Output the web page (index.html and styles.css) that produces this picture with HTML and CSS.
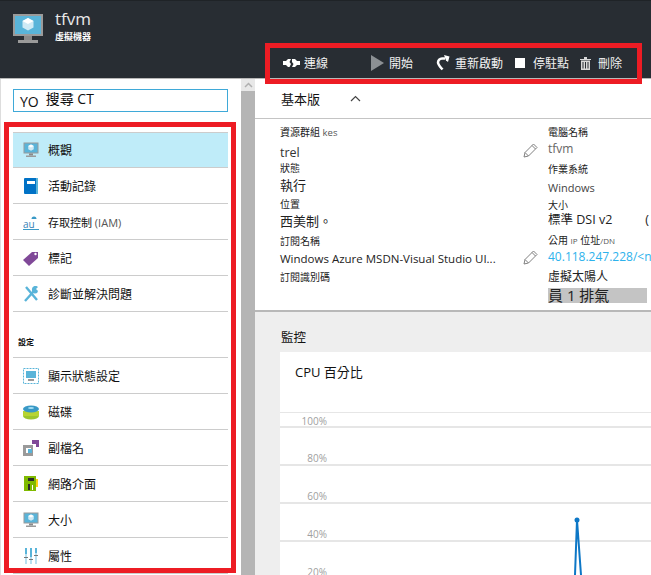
FILE: index.html
```html
<!DOCTYPE html>
<html lang="zh-TW">
<head>
  <meta charset="UTF-8">
  <meta name="viewport" content="width=device-width, initial-scale=1.0">
  <title>tfvm</title>
  <link rel="stylesheet" href="styles.css">
</head>
<body>

  <svg class="defs" width="0" height="0">
    <symbol id="vm" viewBox="0 0 32 32">
      <rect x="1" y="1" width="30" height="22" fill="#9a9a9a"/>
      <rect x="3" y="3" width="26" height="18" fill="#59b4d9"/>
      <path d="M16 5l5.500 3v6.500l-5.500 3-5.500-3V8z" fill="#cfeaf5"/>
      <path d="M16 5l5.500 3-5.500 3-5.500-3z" fill="#fff"/>
      <rect x="12" y="23" width="8" height="4" fill="#8a8a8a"/>
      <rect x="6" y="27" width="20" height="3" fill="#9a9a9a"/>
    </symbol>
  </svg>

  <header class="top">
    <div class="title-row">
      <svg class="title-icon"><use href="#vm"/></svg>
      <div>
        <h1>tfvm</h1>
        <p>虛擬機器</p>
      </div>
    </div>
    <div class="toolbar">
      <span class="tool tool-connect">
        <svg width="17" height="10" viewBox="0 0 17 10"><path d="M0 3h3l2-2h3L6.500 4 8 6 6.500 9H5L3 7H0zM9 1h3l2 2h3v4h-3l-2 2H9l1.500-3L9 4z" fill="#fff"/></svg>
        連線
      </span>
      <span class="tool tool-start">
        <svg width="13" height="16" viewBox="0 0 13 16"><path d="M0 0l13 8-13 8z" fill="#8c9094"/></svg>
        開始
      </span>
      <span class="tool tool-restart">
        <svg width="15" height="16" viewBox="0 0 15 16"><path d="M10 3.500H7a4 4 0 0 0-4 4c0 2 1.500 3.500 4.500 7" fill="none" stroke="#fff" stroke-width="2.500"/><path d="M9 0l5.500 1.500L13 7l-2-1.500z" fill="#fff"/></svg>
        重新啟動
      </span>
      <span class="tool tool-stop">
        <span class="stop-box"></span>
        停駐點
      </span>
      <span class="tool tool-delete">
        <svg width="11" height="13" viewBox="0 0 11 13"><path d="M0 2h11v1H0zM4 0h3v2H4zM1 3.500h9V13H1z" fill="#d8d8d8"/><path d="M3 5v6.500M5.500 5v6.500M8 5v6.500" stroke="#282d33" fill="none"/></svg>
        刪除
      </span>
    </div>
  </header>

  <div class="main">
    <aside class="blade">
      <div class="blade-inner">
        <div class="search"><span class="search-yo">YO</span><span>搜尋 CT</span></div>

        <ul class="menu">
          <li class="active">
            <svg class="ico"><use href="#vm"/></svg>
            概觀
          </li>
          <li>
            <svg class="ico" viewBox="0 0 16 16"><rect x="1" y="0" width="14" height="16" rx="1" fill="#0072c6"/><rect x="4" y="3" width="8" height="3" fill="#fff"/><rect x="13" y="0" width="2" height="16" fill="#59b4d9"/></svg>
            活動記錄
          </li>
          <li>
            <svg class="ico" viewBox="0 0 16 16"><path d="M8.500 5a2.500 2.500 0 0 1 5 0z" fill="#3999c6"/><text x="0" y="14" font-size="10" fill="#3a7fb5">au</text><rect x="0" y="15" width="16" height="1" fill="#3999c6"/></svg>
            <span class="small">存取控制 <span class="latin">(IAM)</span></span>
          </li>
          <li>
            <svg class="ico" viewBox="0 0 16 16"><path d="M0 10l9-8h6v6l-9 8z" fill="#804998"/><circle cx="12.500" cy="4" r="1.200" fill="#fff"/></svg>
            標記
          </li>
          <li>
            <svg class="ico" viewBox="0 0 16 16"><path d="M2 15L11 5M3 1l11 13" stroke="#59b4d9" stroke-width="2.400" fill="none"/><path d="M9 4a3.500 3.500 0 0 1 6-3l-2 2 2 2a3 3 0 0 1-6-1z" fill="#59b4d9"/></svg>
            診斷並解決問題
          </li>
        </ul>

        <h2 class="menu-head">設定</h2>

        <ul class="menu">
          <li>
            <svg class="ico" viewBox="0 0 16 16"><rect x=".5" y=".5" width="15" height="15" fill="none" stroke="#59b4d9" stroke-dasharray="2 1"/><rect x="3" y="3" width="10" height="7" fill="#59b4d9"/><rect x="5" y="11" width="6" height="2" fill="#9a9a9a"/></svg>
            顯示狀態設定
          </li>
          <li>
            <svg class="ico" viewBox="0 0 16 16"><ellipse cx="8" cy="12" rx="8" ry="3.500" fill="#9dc62d"/><rect x="0" y="7" width="16" height="5" fill="#b8d432"/><ellipse cx="8" cy="5" rx="8" ry="3.500" fill="#3999c6"/><ellipse cx="8" cy="4" rx="3" ry="1" fill="#a5dff5"/></svg>
            磁碟
          </li>
          <li>
            <svg class="ico" viewBox="0 0 16 16"><path d="M0 5h10v11H0z" fill="#9a9a9a"/><rect x="3" y="8" width="5" height="5" fill="#fff"/><rect x="5" y="9" width="4" height="4" fill="#59b4d9"/><path d="M9 0h7v7h-3V4H9z" fill="#804998"/></svg>
            副檔名
          </li>
          <li>
            <svg class="ico" viewBox="0 0 16 16"><rect x="1" y="0" width="12" height="15" fill="#7fba00"/><rect x="5" y="2" width="6" height="3" fill="#2b2b2b"/><rect x="5" y="8" width="2" height="6" fill="#2b2b2b"/><rect x="9" y="9" width="1" height="5" fill="#fff"/><rect x="13" y="3" width="2" height="8" fill="#fcd116"/></svg>
            網路介面
          </li>
          <li>
            <svg class="ico"><use href="#vm"/></svg>
            大小
          </li>
          <li>
            <svg class="ico" viewBox="0 0 16 16"><path d="M2 0h2v16H2zM7 0h2v16H7zM12 0h2v16h-2z" fill="#b8e0f0"/><path d="M2 0h2v6H2zM7 0h2v9H7zM12 0h2v5h-2z" fill="#59b4d9"/><path d="M1 9h4v1H1zM6 11h4v1H6zM11 7h4v1h-4z" fill="#777"/></svg>
            屬性
          </li>
        </ul>
      </div>
      <div class="scrollbar">
        <span class="scroll-up">
          <svg width="9" height="6" viewBox="0 0 9 6"><path d="M1 5l3.500-3.500L8 5" fill="none" stroke="#b0b0b0" stroke-width="1.500"/></svg>
        </span>
      </div>
    </aside>

    <main class="content">
      <div class="essentials">
        基本版
        <svg width="11" height="7" viewBox="0 0 11 7"><path d="M1 6l4.500-4.500L10 6" fill="none" stroke="#444" stroke-width="1.200"/></svg>
      </div>

      <div class="props">
        <div class="col col-left">
          <div class="label">資源群組 <span class="kes">kes</span></div>
          <div class="value val-link edit">trel
            <svg class="pencil pencil-first" viewBox="0 0 15 15"><path d="M1 14l1-4.500L10.500 1l3.500 3.500L5.500 13zM2 9.500L5.500 13M9 2.500L12.500 6" fill="none" stroke="#808080"/></svg>
          </div>
          <div class="label">狀態</div>
          <div class="value big">執行</div>
          <div class="label">位置</div>
          <div class="value big big-last">西美制。</div>
          <div class="label">訂閱名稱</div>
          <div class="value edit sub">Windows Azure MSDN-Visual Studio UI...
            <svg class="pencil" viewBox="0 0 15 15"><path d="M1 14l1-4.500L10.500 1l3.500 3.500L5.500 13zM2 9.500L5.500 13M9 2.500L12.500 6" fill="none" stroke="#808080"/></svg>
          </div>
          <div class="label">訂閱識別碼</div>
        </div>
        <div class="col col-right">
          <div class="label">電腦名稱</div>
          <div class="value grey">tfvm</div>
          <div class="label">作業系統</div>
          <div class="value os">Windows</div>
          <div class="label">大小</div>
          <div class="value size"><span>標準 DSI v2</span><span>(</span></div>
          <div class="label">公用 <span class="tiny">IP</span> 位址<span class="tiny">/DN</span></div>
          <div class="value ip">40.118.247.228/&lt;n</div>
          <div class="label vnet">虛擬太陽人</div>
          <div class="value masked">員 1 排氣</div>
        </div>
      </div>

      <section class="monitor">
        <h2>監控</h2>
        <div class="card">
          <h3>CPU 百分比</h3>
          <div class="chart">
            <div class="tick tick-top">100%</div>
            <div class="tick">80%</div>
            <div class="tick">60%</div>
            <div class="tick">40%</div>
            <div class="tick">20%</div>
            <svg class="spike" width="20" height="65" viewBox="0 0 20 65"><path d="M5 60L7 5l4 55" fill="none" stroke="#0d77c6" stroke-width="2"/><circle cx="7" cy="5" r="2.500" fill="#0d77c6"/></svg>
          </div>
        </div>
      </section>
    </main>
  </div>

  <div class="frame frame-tools"></div>
  <div class="frame frame-menu"></div>

</body>
</html>
```

FILE: styles.css
```css
* {
  box-sizing: border-box;
}

html, body {
  margin: 0;
  padding: 0;
}

body {
  position: relative;
  width: 651px;
  height: 575px;
  overflow: hidden;
  background: #fff;
  color: #111;
  font-family: "Open Sans", "Noto Sans CJK TC", sans-serif;
  font-size: 12px;
}

.defs {
  position: absolute;
}

/* header */
.top {
  height: 78px;
  background: #282d33;
  border-top: 1px solid #1f2327;
  color: #fff;
  overflow: hidden;
}

.title-row {
  display: flex;
  height: 52px;
  padding: 8px 0 0 12px;
}

.title-icon {
  width: 32px;
  height: 32px;
  margin: 4px 11px 0 0;
}

.title-row h1 {
  margin: 0;
  font-size: 17px;
  font-weight: 400;
  line-height: 20px;
  color: #e8e8e8;
}

.title-row p {
  margin: 2px 0 0;
  font-size: 9px;
  font-weight: 700;
  line-height: 12px;
}

.toolbar {
  display: flex;
  align-items: center;
  height: 20px;
  padding-left: 283px;
  font-size: 12px;
  color: #f2f2f2;
  white-space: nowrap;
}

.tool {
  display: flex;
  align-items: center;
}

.tool-connect { gap: 4px; width: 88px; }
.tool-start { gap: 5px; width: 64px; }
.tool-restart { gap: 5px; width: 80px; }
.tool-stop { gap: 8px; width: 65px; }
.tool-delete { gap: 7px; }

.stop-box {
  width: 10px;
  height: 10px;
  background: #fff;
}

/* left blade */
.main {
  display: flex;
  height: 497px;
}

.blade {
  display: flex;
  flex: none;
  width: 255px;
  border-top: 1px solid #b8b8b8;
}

.blade-inner {
  width: 241px;
  padding: 10px 13px 0;
  border-left: 1px solid #ddd;
}

.search {
  display: flex;
  gap: 7px;
  width: 215px;
  height: 23px;
  margin-left: -1px;
  margin-bottom: 20px;
  padding-left: 6px;
  border: 1px solid #3fa9d8;
  font-size: 14px;
  line-height: 17px;
}

.search-yo {
  padding-top: 3px;
}

.menu {
  margin: 0 0 0 -1px;
  padding: 0;
  width: 215px;
  list-style: none;
  border-top: 1px solid #ccc;
}

.menu li {
  display: flex;
  align-items: center;
  height: 36px;
  padding-left: 10px;
  border-bottom: 1px solid #ccc;
  font-size: 12px;
  color: #111;
}

.menu li.active {
  height: 35px;
  background: #bfecf9;
}

.ico {
  flex: none;
  width: 16px;
  height: 16px;
  margin-right: 9px;
}

.small {
  font-size: 11px;
}

.latin {
  color: #555;
}

.menu-head {
  margin: 0;
  height: 45px;
  padding: 23px 0 0 4px;
  font-size: 8px;
  font-weight: 700;
  line-height: 14px;
}

.scrollbar {
  width: 14px;
  background: #b5b5b5;
}

.scroll-up {
  display: flex;
  justify-content: center;
  align-items: center;
  height: 12px;
  background: #e8e8e8;
}

/* right side */
.content {
  flex: 1;
  min-width: 0;
  border-top: 1px solid #b8b8b8;
}

.essentials {
  display: flex;
  align-items: center;
  gap: 30px;
  height: 40px;
  padding-left: 26px;
  border-bottom: 1px solid #c4c4c4;
  font-size: 13px;
}

.props {
  display: flex;
  height: 193px;
  padding: 5px 0 0 25px;
  overflow: hidden;
  border-bottom: 2px solid #b8b8b8;
}

.col-left {
  width: 268px;
  flex: none;
}

.col-right {
  flex: 1;
  white-space: nowrap;
}

.label {
  height: 16px;
  font-size: 10px;
  line-height: 16px;
  color: #222;
}

.kes {
  font-size: 9.5px;
  color: #555;
}

.tiny {
  font-size: 8px;
  color: #555;
}

.value {
  position: relative;
  height: 21px;
  font-size: 12px;
  line-height: 20px;
  color: #222;
}

.val-link {
  height: 20px;
  padding-top: 3px;
  font-size: 12.5px;
  color: #333;
}

.big {
  font-size: 13px;
  height: 20px;
  line-height: 19px;
}

.big-last {
  height: 21px;
}

.sub {
  height: 20px;
  font-size: 11.5px;
  white-space: nowrap;
}

.pencil {
  position: absolute;
  right: 10px;
  top: 1px;
  width: 15px;
  height: 15px;
}

.pencil-first {
  top: 3px;
}

.grey {
  color: #666;
  line-height: 18px;
}

.os {
  height: 20px;
  padding-top: 1px;
  font-size: 11px;
  color: #444;
}

.size {
  display: flex;
  justify-content: space-between;
  width: 101px;
  height: 19px;
  font-size: 12.5px;
  line-height: 14px;
}

.ip {
  height: 22px;
  font-size: 12px;
  line-height: 18px;
  color: #2db2ec;
}

.vnet {
  height: 18px;
  font-size: 12px;
  line-height: 14px;
}

.masked {
  width: 99px;
  height: 15px;
  background: #c4c4c4;
  font-size: 15px;
  line-height: 15px;
}

/* monitoring */
.monitor {
  height: 263px;
  padding-left: 25px;
  background: #eee;
}

.monitor h2 {
  margin: 0;
  height: 40px;
  padding: 15px 0 0 1px;
  font-size: 12.5px;
  font-weight: 400;
  line-height: 22px;
}

.card {
  height: 223px;
  background: #fff;
}

.card h3 {
  margin: 0;
  height: 60px;
  padding: 9px 0 0 15px;
  font-size: 13px;
  font-weight: 400;
  line-height: 22px;
}

.chart {
  position: relative;
  border-top: 1px solid #e6e6e6;
}

.tick {
  height: 38px;
  width: 100%;
  padding-top: 24px;
  padding-right: 324px;
  text-align: right;
  border-bottom: 2px solid #e6e6e6;
  font-size: 10px;
  line-height: 12px;
  color: #a0a0a0;
}

.tick-top {
  height: 15px;
  padding-top: 2px;
}

.spike {
  position: absolute;
  left: 290px;
  top: 102px;
}

/* red annotation boxes */
.frame {
  position: absolute;
  border: 5px solid #ed1c24;
  pointer-events: none;
}

.frame-tools {
  left: 265px;
  top: 43px;
  width: 377px;
  height: 41px;
}

.frame-menu {
  left: 4px;
  top: 122px;
  width: 232px;
  height: 451px;
}
```
